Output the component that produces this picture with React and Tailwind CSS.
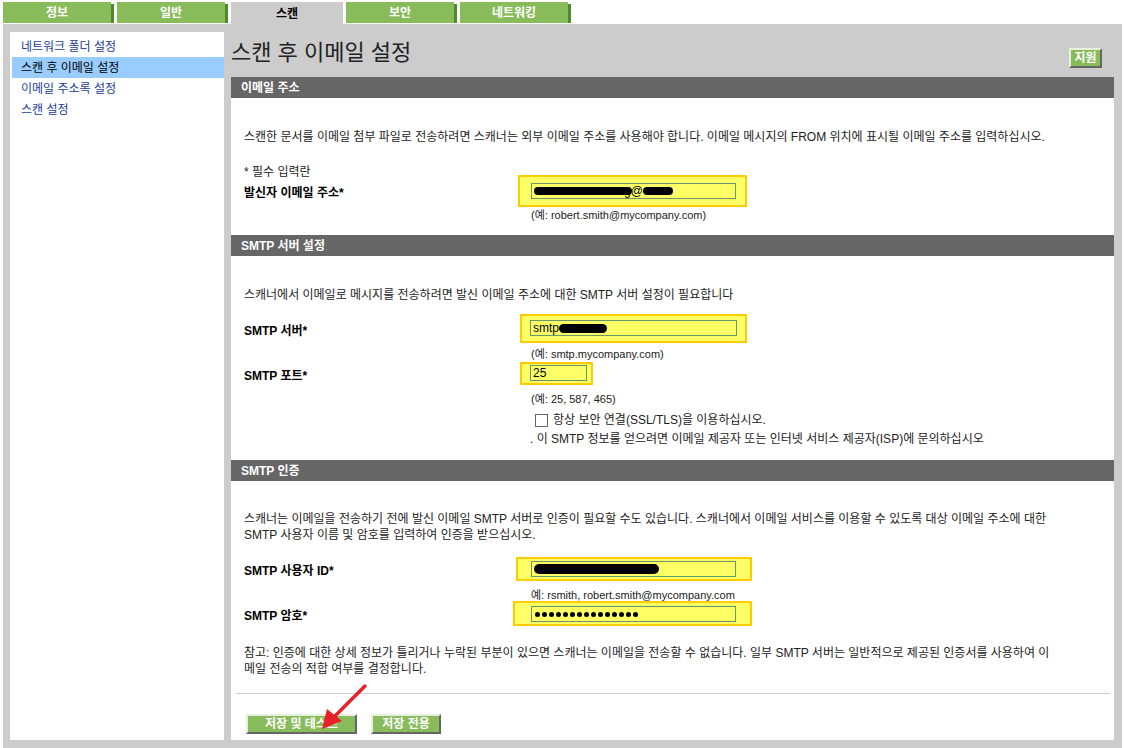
import React from 'react';

const tabs = [
  { label: '정보' },
  { label: '일반' },
  { label: '스캔', active: true },
  { label: '보안' },
  { label: '네트워킹' },
];

const sideLinks = [
  { label: '네트워크 폴더 설정' },
  { label: '스캔 후 이메일 설정', active: true },
  { label: '이메일 주소록 설정' },
  { label: '스캔 설정' },
];

const Tab = ({ label, active }) => {
  if (active) {
    return (
      <div className="w-[112px] h-[24px] mt-[2px] bg-[#cccccc] flex items-center justify-center text-[12px] font-bold text-black">
        {label}
      </div>
    );
  }
  return (
    <div className="relative w-[111px] h-[21px] mt-[2px] bg-[#88bb5a] border-r-[3px] border-[#4c8a2e] flex items-center justify-center text-[12px] font-bold text-white">
      {label}
      <span className="absolute -top-px -right-[3px] w-[3px] h-[3px] bg-white" />
    </div>
  );
};

const SectionHeader = ({ children }) => (
  <div className="h-[21px] bg-[#666666] text-white font-bold text-[12px] flex items-center pl-[10px]">
    {children}
  </div>
);

const Highlight = ({ children, className = '' }) => (
  <div className={`bg-[#ffff66] border-2 border-[#ffcc00] ${className}`}>{children}</div>
);

const Input = ({ children, w = 'w-[205px]' }) => (
  <div className={`${w} h-[16px] border border-[#669966] flex items-center px-[2px] text-[12px] text-black overflow-hidden whitespace-nowrap`}>
    {children}
  </div>
);

const Redact = ({ w, h = 'h-[8px]' }) => (
  <span className={`inline-block ${w} ${h} bg-black rounded-full align-middle`} />
);

const GreenButton = ({ children, w }) => (
  <div className={`${w} h-[20px] bg-[#88bb5a] border-t-2 border-l-2 border-t-[#e6f0dc] border-l-[#e6f0dc] border-b-2 border-r-2 border-b-[#666666] border-r-[#666666] flex items-center justify-center text-white font-bold text-[12px]`}>
    {children}
  </div>
);

export default function App() {
  return (
    <div
      className="w-[1124px] h-[748px] bg-white overflow-hidden relative text-[12px] text-[#222222]"
      style={{ fontFamily: '"Liberation Sans", "Noto Sans CJK KR", sans-serif' }}
    >
      {/* tabs */}
      <div className="flex gap-[3px] pl-[3px] h-[24px]">
        {tabs.map((t) => (
          <Tab key={t.label} {...t} />
        ))}
      </div>

      <div className="ml-[3px] mr-[2px] h-[724px] bg-[#cccccc] flex pt-[8px] pl-[7px] pr-[8px] pb-[8px] gap-[7px]">
        {/* sidebar */}
        <div className="w-[214px] bg-white pt-[4px] pl-[2px]">
          {sideLinks.map((l) => (
            <div
              key={l.label}
              className={`h-[21px] flex items-center pl-[9px] text-[12px] ${
                l.active ? 'bg-[#99ccff] text-black' : 'text-[#1a3d99]'
              }`}
            >
              {l.label}
            </div>
          ))}
        </div>

        {/* main */}
        <div className="flex-1 flex flex-col">
          <div className="h-[45px] flex items-start justify-between">
            <div className="text-[22px] text-[#222222] mt-[7px] leading-[28px]">스캔 후 이메일 설정</div>
            <div className="mt-[16px] mr-[12px]">
              <GreenButton w="w-[33px]">지원</GreenButton>
            </div>
          </div>

          <div className="flex-1 bg-white flex flex-col">
            <SectionHeader>이메일 주소</SectionHeader>
            <div className="pl-[13px] pr-[10px]">
              <div className="mt-[31px] leading-[16px]">
                스캔한 문서를 이메일 첨부 파일로 전송하려면 스캐너는 외부 이메일 주소를 사용해야 합니다. 이메일 메시지의 FROM 위치에 표시될 이메일 주소를 입력하십시오.
              </div>
              <div className="mt-[19px] leading-[16px]">* 필수 입력란</div>
              <div className="flex items-center -mt-[5px]">
                <div className="w-[274px] pt-[4px] font-bold text-black">발신자 이메일 주소*</div>
                <Highlight className="w-[229px] h-[32px] pl-[11px] pt-[6px]">
                  <Input>
                    <Redact w="w-[98px]" />
                    <span className="-ml-[8px]">g@</span>
                    <Redact w="w-[30px]" />
                  </Input>
                </Highlight>
              </div>
              <div className="ml-[287px] mt-[1px] leading-[14px] text-[11px]">(예: robert.smith@mycompany.com)</div>
            </div>

            <div className="mt-[13px]">
              <SectionHeader>SMTP 서버 설정</SectionHeader>
            </div>
            <div className="pl-[13px] pr-[10px]">
              <div className="mt-[31px] leading-[16px]">
                스캐너에서 이메일로 메시지를 전송하려면 발신 이메일 주소에 대한 SMTP 서버 설정이 필요합니다
              </div>
              <div className="flex items-center mt-[11px]">
                <div className="w-[276px] pt-[5px] font-bold text-black">SMTP 서버*</div>
                <Highlight className="w-[227px] h-[29px] pl-[8px] pt-[4px]">
                  <Input w="w-[207px]">
                    smtp
                    <Redact w="w-[48px]" h="h-[9px]" />
                  </Input>
                </Highlight>
              </div>
              <div className="ml-[287px] mt-[4px] leading-[14px] text-[11px]">(예: smtp.mycompany.com)</div>
              <div className="flex items-center mt-[1px]">
                <div className="w-[276px] pt-[5px] font-bold text-black">SMTP 포트*</div>
                <Highlight className="w-[73px] h-[23px] pl-[8px] pt-[1px]">
                  <Input w="w-[57px]">25</Input>
                </Highlight>
              </div>
              <div className="ml-[287px] mt-[7px] leading-[14px] text-[11px]">(예: 25, 587, 465)</div>
              <div className="ml-[291px] mt-[7px] flex items-center gap-[5px] leading-[14px]">
                <span className="w-[13px] h-[13px] border border-[#666666] bg-white" />
                <span>항상 보안 연결(SSL/TLS)을 이용하십시오.</span>
              </div>
              <div className="ml-[286px] mt-[4px] leading-[16px]">
                . 이 SMTP 정보를 얻으려면 이메일 제공자 또는 인터넷 서비스 제공자(ISP)에 문의하십시오
              </div>
            </div>

            <div className="mt-[13px]">
              <SectionHeader>SMTP 인증</SectionHeader>
            </div>
            <div className="pl-[13px] pr-[10px]">
              <div className="mt-[30px] leading-[16px] w-[812px]">
                스캐너는 이메일을 전송하기 전에 발신 이메일 SMTP 서버로 인증이 필요할 수도 있습니다. 스캐너에서 이메일 서비스를 이용할 수 있도록 대상 이메일 주소에 대한 SMTP 사용자 이름 및 암호를 입력하여 인증을 받으십시오.
              </div>
              <div className="flex items-center mt-[14px]">
                <div className="w-[272px] pt-[4px] font-bold text-black">SMTP 사용자 ID*</div>
                <Highlight className="w-[236px] h-[24px] pl-[13px] pt-[2px]">
                  <Input>
                    <Redact w="w-[125px]" h="h-[10px]" />
                  </Input>
                </Highlight>
              </div>
              <div className="ml-[287px] mt-[7px] leading-[14px] text-[11px]">예: rsmith, robert.smith@mycompany.com</div>
              <div className="flex items-center -mt-[1px]">
                <div className="w-[269px] pt-[4px] font-bold text-black">SMTP 암호*</div>
                <Highlight className="w-[239px] h-[25px] pl-[16px] pt-[3px]">
                  <Input>
                    <span className="flex gap-[2px] ml-[1px]">
                      {Array.from({ length: 15 }).map((_, i) => (
                        <span key={i} className="w-[5px] h-[5px] rounded-full bg-black" />
                      ))}
                    </span>
                  </Input>
                </Highlight>
              </div>
              <div className="mt-[19px] leading-[16px] w-[812px]">
                참고: 인증에 대한 상세 정보가 틀리거나 누락된 부분이 있으면 스캐너는 이메일을 전송할 수 없습니다. 일부 SMTP 서버는 일반적으로 제공된 인증서를 사용하여 이메일 전송의 적합 여부를 결정합니다.
              </div>
            </div>

            <div className="mt-[16px] ml-[5px] mr-[4px] h-px bg-[#cccccc]" />
            <div className="flex gap-[14px] ml-[15px] mt-[20px]">
              <GreenButton w="w-[111px]">저장 및 테스트</GreenButton>
              <GreenButton w="w-[70px]">저장 전용</GreenButton>
            </div>
          </div>
        </div>
      </div>

      {/* red arrow annotation */}
      <svg className="absolute left-[310px] top-[681px]" width="70" height="55" viewBox="0 0 70 55">
        <line x1="55" y1="5" x2="24" y2="36" stroke="#e8202a" strokeWidth="3.5" strokeLinecap="round" />
        <polygon points="12,48 17,28 32,40" fill="#e8202a" />
      </svg>
    </div>
  );
}
